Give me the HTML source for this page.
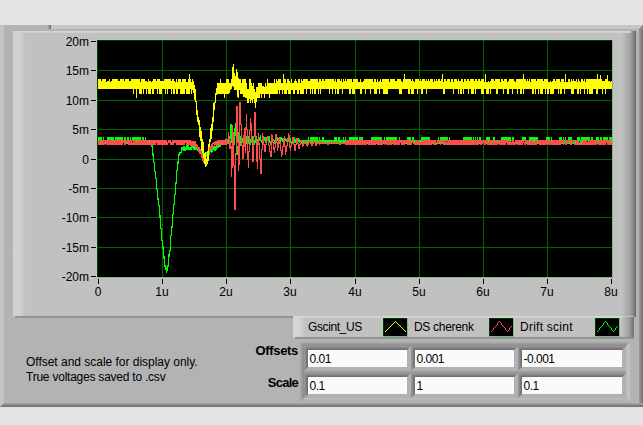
<!DOCTYPE html>
<html><head><meta charset="utf-8"><title>Waveform display</title>
<style>
html,body{margin:0;padding:0}
body{width:643px;height:425px;overflow:hidden;background:#e4e4e4;position:relative;font-family:"Liberation Sans",sans-serif;font-size:12px;color:#000}
div,span{position:absolute;box-sizing:border-box}
.t{white-space:nowrap;line-height:14px;height:14px}
.yl{right:554px;text-align:right}
.xl{text-align:center;width:40px}
.b{font-weight:bold;font-size:13px;text-align:right;right:345px}
</style></head><body>

<div id="panel" style="left:0;top:25px;width:643px;height:382px;background:#b3b3b3"></div>
<div style="left:0;top:25px;width:4px;height:382px;background:#c5c5c5"></div>
<div style="left:51px;top:25px;width:592px;height:4px;background:#c6c6c6"></div>
<div style="left:47px;top:25px;width:4px;height:4px;background:linear-gradient(90deg,#b0b0b0,#999 50%,#5e5e5e)"></div>
<div style="left:639px;top:29px;width:4px;height:378px;background:linear-gradient(90deg,#9a9a9a,#747474)"></div>
<div style="left:0;top:403px;width:643px;height:4px;background:linear-gradient(180deg,#a8a8a8,#6c6c6c)"></div>
<svg style="position:absolute;left:0;top:0" width="643" height="425" shape-rendering="auto"><polygon points="639,29 643,25 643,29" fill="#8a8a8a"/><polygon points="0,403 4,403 0,407" fill="#c5c5c5"/></svg>
<div id="graph" style="left:13px;top:31px;width:623px;height:286px;background:#c1c1c1"></div>
<div style="left:13px;top:31px;width:12px;height:285px;background:linear-gradient(90deg,#d3d3d3,#d0d0d0 62%,#c1c1c1)"></div>
<div style="left:622px;top:31px;width:14px;height:286px;background:linear-gradient(90deg,#c1c1c1,#a0a0a0 60%,#7a7a7a 90%,#5c5c5c)"></div>
<div style="left:13px;top:31px;width:618px;height:2px;background:linear-gradient(180deg,#d6d6d6,#cecece)"></div>
<div style="left:15px;top:316px;width:278px;height:2px;background:linear-gradient(180deg,#8c8c8c,#9c9c9c)"></div>
<div id="legend" style="left:293px;top:316px;width:341px;height:22px;background:#c1c1c1"></div>
<div style="left:293px;top:316px;width:12px;height:22px;background:linear-gradient(90deg,#d6d6d6,#d2d2d2 62%,#c1c1c1)"></div>
<div style="left:621px;top:317px;width:13px;height:21px;background:linear-gradient(90deg,#c4c4c4,#a0a0a0 60%,#707070)"></div>
<div style="left:293px;top:316px;width:330px;height:2px;background:linear-gradient(180deg,#d8d8d8,#cecece)"></div>
<div style="left:295px;top:337px;width:339px;height:2px;background:linear-gradient(180deg,#8a8a8a,#999)"></div>
<svg style="position:absolute;left:0;top:0" width="643" height="425" shape-rendering="crispEdges">
<rect x="97" y="40" width="516" height="238" fill="#7fb97f"/><rect x="97" y="40" width="515" height="237" fill="#003c00"/><rect x="98" y="41" width="514" height="236" fill="#000"/>
<g fill="#006400"><rect x="162" y="40" width="1" height="237"/><rect x="226" y="40" width="1" height="237"/><rect x="290" y="40" width="1" height="237"/><rect x="355" y="40" width="1" height="237"/><rect x="419" y="40" width="1" height="237"/><rect x="483" y="40" width="1" height="237"/><rect x="547" y="40" width="1" height="237"/><rect x="97" y="70" width="515" height="1"/><rect x="97" y="100" width="515" height="1"/><rect x="97" y="129" width="515" height="1"/><rect x="97" y="159" width="515" height="1"/><rect x="97" y="188" width="515" height="1"/><rect x="97" y="217" width="515" height="1"/><rect x="97" y="247" width="515" height="1"/></g>
<path d="M98 137h1v7h-1zM99 137h1v4h-1zM100 137h1v7h-1zM101 137h1v7h-1zM102 140h1v4h-1zM103 137h1v7h-1zM104 140h1v1h-1zM105 140h1v4h-1zM106 140h1v4h-1zM107 137h1v7h-1zM108 137h1v7h-1zM109 137h1v7h-1zM110 137h1v7h-1zM111 137h1v4h-1zM112 137h1v7h-1zM113 137h1v7h-1zM114 140h1v4h-1zM115 137h1v7h-1zM116 137h1v4h-1zM117 137h1v7h-1zM118 137h1v7h-1zM119 137h1v7h-1zM120 137h1v7h-1zM121 137h1v7h-1zM122 137h1v7h-1zM123 140h1v1h-1zM124 137h1v7h-1zM125 137h1v7h-1zM126 140h1v4h-1zM127 137h1v7h-1zM128 137h1v7h-1zM129 143h1v1h-1zM130 137h1v7h-1zM131 140h1v4h-1zM132 137h1v4h-1zM133 137h1v4h-1zM134 137h1v7h-1zM135 137h1v7h-1zM136 137h1v7h-1zM137 137h1v4h-1zM138 137h1v7h-1zM139 137h1v7h-1zM140 137h1v7h-1zM141 140h1v4h-1zM142 137h1v7h-1zM143 137h1v7h-1zM144 140h1v4h-1zM145 137h1v7h-1zM146 140h1v4h-1zM147 140h1v4h-1zM148 140h1v4h-1zM149 140h1v4h-1zM150 140h1v3h-1zM151 140h1v7h-1zM152 143h1v13h-1zM153 153h1v10h-1zM154 162h1v10h-1zM155 171h1v8h-1zM156 178h1v12h-1zM157 189h1v11h-1zM158 198h1v8h-1zM159 205h1v13h-1zM160 215h1v14h-1zM161 228h1v13h-1zM162 240h1v9h-1zM163 246h1v13h-1zM164 256h1v11h-1zM165 265h1v5h-1zM166 267h1v6h-1zM167 265h1v6h-1zM168 254h1v13h-1zM169 250h1v7h-1zM170 235h1v16h-1zM171 226h1v10h-1zM172 214h1v14h-1zM173 204h1v11h-1zM174 194h1v11h-1zM175 182h1v13h-1zM176 170h1v14h-1zM177 161h1v10h-1zM178 154h1v10h-1zM179 152h1v4h-1zM180 152h1v2h-1zM181 147h1v6h-1zM182 147h1v3h-1zM183 146h1v5h-1zM184 146h1v5h-1zM185 147h1v4h-1zM186 145h1v5h-1zM187 145h1v5h-1zM188 145h1v5h-1zM189 147h1v3h-1zM190 147h1v3h-1zM191 145h1v5h-1zM192 145h1v3h-1zM193 145h1v5h-1zM194 145h1v5h-1zM195 145h1v5h-1zM196 145h1v5h-1zM197 146h1v5h-1zM198 147h1v5h-1zM199 150h1v3h-1zM200 149h1v5h-1zM201 150h1v6h-1zM202 151h1v6h-1zM203 152h1v7h-1zM204 154h1v5h-1zM205 153h1v5h-1zM206 152h1v5h-1zM207 151h1v5h-1zM208 150h1v4h-1zM209 149h1v6h-1zM210 148h1v4h-1zM211 147h1v6h-1zM212 147h1v5h-1zM213 146h1v4h-1zM214 146h1v5h-1zM215 146h1v5h-1zM216 146h1v4h-1zM217 144h1v4h-1zM218 143h1v5h-1zM219 142h1v5h-1zM220 143h1v4h-1zM221 141h1v3h-1zM222 140h1v4h-1zM223 140h1v5h-1zM224 140h1v3h-1zM225 139h1v5h-1zM226 139h1v5h-1zM227 139h1v5h-1zM228 139h1v5h-1zM229 138h1v9h-1zM230 124h1v15h-1zM231 124h1v19h-1zM232 142h1v17h-1zM233 144h1v13h-1zM234 128h1v17h-1zM235 123h1v13h-1zM236 135h1v20h-1zM237 146h1v9h-1zM238 132h1v15h-1zM239 127h1v10h-1zM240 136h1v10h-1zM241 140h1v6h-1zM242 138h1v5h-1zM243 135h1v4h-1zM244 136h1v8h-1zM245 142h1v4h-1zM246 136h1v8h-1zM247 136h1v4h-1zM248 136h1v8h-1zM249 141h1v4h-1zM250 139h1v6h-1zM251 135h1v6h-1zM252 136h1v6h-1zM253 140h1v5h-1zM254 140h1v5h-1zM255 136h1v7h-1zM256 136h1v4h-1zM257 139h1v6h-1zM258 139h1v6h-1zM259 137h1v4h-1zM260 135h1v6h-1zM261 140h1v3h-1zM262 140h1v5h-1zM263 139h1v5h-1zM264 137h1v4h-1zM265 137h1v6h-1zM266 139h1v5h-1zM267 138h1v3h-1zM268 136h1v4h-1zM269 136h1v7h-1zM270 141h1v4h-1zM271 140h1v4h-1zM272 138h1v4h-1zM273 139h1v2h-1zM274 140h1v4h-1zM275 140h1v4h-1zM276 137h1v5h-1zM277 137h1v4h-1zM278 138h1v6h-1zM279 141h1v3h-1zM280 137h1v6h-1zM281 137h1v4h-1zM282 138h1v4h-1zM283 140h1v3h-1zM284 138h1v4h-1zM285 138h1v3h-1zM286 139h1v3h-1zM287 139h1v4h-1zM288 139h1v3h-1zM289 138h1v4h-1zM290 138h1v5h-1zM291 142h1v2h-1zM292 139h1v5h-1zM293 137h1v5h-1zM294 137h1v6h-1zM295 139h1v4h-1zM296 139h1v5h-1zM297 139h1v3h-1zM298 138h1v4h-1zM299 139h1v4h-1zM300 140h1v4h-1zM301 140h1v4h-1zM302 140h1v4h-1zM303 140h1v4h-1zM304 140h1v4h-1zM305 140h1v4h-1zM306 140h1v4h-1zM307 140h1v4h-1zM308 137h1v7h-1zM309 140h1v1h-1zM310 137h1v4h-1zM311 137h1v7h-1zM312 137h1v7h-1zM313 137h1v7h-1zM314 137h1v4h-1zM315 137h1v7h-1zM316 137h1v7h-1zM317 137h1v7h-1zM318 140h1v4h-1zM319 137h1v7h-1zM320 140h1v4h-1zM321 140h1v4h-1zM322 137h1v7h-1zM323 137h1v7h-1zM324 140h1v4h-1zM325 140h1v4h-1zM326 140h1v4h-1zM327 140h1v4h-1zM328 140h1v4h-1zM329 140h1v4h-1zM330 140h1v4h-1zM331 140h1v4h-1zM332 140h1v4h-1zM333 140h1v4h-1zM334 137h1v7h-1zM335 137h1v7h-1zM336 137h1v7h-1zM337 140h1v4h-1zM338 137h1v7h-1zM339 137h1v7h-1zM340 140h1v4h-1zM341 140h1v4h-1zM342 140h1v4h-1zM343 137h1v7h-1zM344 140h1v4h-1zM345 137h1v7h-1zM346 140h1v4h-1zM347 140h1v4h-1zM348 140h1v4h-1zM349 137h1v7h-1zM350 137h1v7h-1zM351 137h1v7h-1zM352 137h1v7h-1zM353 137h1v7h-1zM354 137h1v7h-1zM355 137h1v7h-1zM356 137h1v7h-1zM357 137h1v7h-1zM358 140h1v4h-1zM359 137h1v7h-1zM360 137h1v7h-1zM361 137h1v7h-1zM362 137h1v7h-1zM363 140h1v4h-1zM364 140h1v4h-1zM365 140h1v4h-1zM366 140h1v4h-1zM367 140h1v4h-1zM368 140h1v4h-1zM369 140h1v4h-1zM370 140h1v4h-1zM371 137h1v7h-1zM372 137h1v4h-1zM373 137h1v7h-1zM374 137h1v7h-1zM375 137h1v7h-1zM376 137h1v7h-1zM377 137h1v7h-1zM378 137h1v7h-1zM379 137h1v4h-1zM380 137h1v7h-1zM381 137h1v7h-1zM382 140h1v1h-1zM383 140h1v4h-1zM384 137h1v7h-1zM385 140h1v4h-1zM386 137h1v7h-1zM387 137h1v7h-1zM388 137h1v7h-1zM389 137h1v7h-1zM390 137h1v7h-1zM391 137h1v7h-1zM392 137h1v7h-1zM393 137h1v4h-1zM394 137h1v7h-1zM395 137h1v4h-1zM396 137h1v7h-1zM397 140h1v4h-1zM398 140h1v4h-1zM399 137h1v4h-1zM400 140h1v1h-1zM401 140h1v4h-1zM402 140h1v4h-1zM403 140h1v4h-1zM404 140h1v4h-1zM405 140h1v4h-1zM406 140h1v4h-1zM407 137h1v7h-1zM408 137h1v7h-1zM409 137h1v7h-1zM410 137h1v7h-1zM411 140h1v4h-1zM412 137h1v4h-1zM413 137h1v7h-1zM414 140h1v4h-1zM415 140h1v4h-1zM416 140h1v1h-1zM417 140h1v4h-1zM418 140h1v4h-1zM419 140h1v4h-1zM420 140h1v4h-1zM421 137h1v7h-1zM422 137h1v7h-1zM423 137h1v7h-1zM424 137h1v7h-1zM425 137h1v7h-1zM426 137h1v7h-1zM427 137h1v7h-1zM428 137h1v7h-1zM429 137h1v7h-1zM430 143h1v1h-1zM431 143h1v1h-1zM432 140h1v4h-1zM433 140h1v4h-1zM434 140h1v4h-1zM435 140h1v4h-1zM436 140h1v1h-1zM437 140h1v4h-1zM438 137h1v7h-1zM439 140h1v4h-1zM440 137h1v7h-1zM441 137h1v7h-1zM442 137h1v7h-1zM443 137h1v7h-1zM444 137h1v7h-1zM445 137h1v7h-1zM446 137h1v4h-1zM447 137h1v4h-1zM448 140h1v4h-1zM449 137h1v7h-1zM450 140h1v4h-1zM451 140h1v4h-1zM452 140h1v4h-1zM453 140h1v4h-1zM454 140h1v4h-1zM455 140h1v4h-1zM456 140h1v4h-1zM457 140h1v4h-1zM458 140h1v4h-1zM459 140h1v4h-1zM460 140h1v4h-1zM461 140h1v4h-1zM462 140h1v4h-1zM463 137h1v7h-1zM464 137h1v7h-1zM465 137h1v7h-1zM466 137h1v7h-1zM467 137h1v4h-1zM468 137h1v4h-1zM469 137h1v7h-1zM470 137h1v4h-1zM471 137h1v7h-1zM472 140h1v4h-1zM473 137h1v7h-1zM474 140h1v4h-1zM475 137h1v7h-1zM476 140h1v4h-1zM477 137h1v7h-1zM478 140h1v4h-1zM479 137h1v7h-1zM480 137h1v7h-1zM481 140h1v4h-1zM482 140h1v4h-1zM483 140h1v1h-1zM484 140h1v4h-1zM485 140h1v4h-1zM486 137h1v7h-1zM487 137h1v7h-1zM488 137h1v7h-1zM489 137h1v7h-1zM490 140h1v4h-1zM491 140h1v4h-1zM492 140h1v4h-1zM493 137h1v7h-1zM494 137h1v7h-1zM495 140h1v4h-1zM496 140h1v4h-1zM497 140h1v4h-1zM498 140h1v4h-1zM499 140h1v4h-1zM500 140h1v4h-1zM501 137h1v7h-1zM502 137h1v7h-1zM503 137h1v7h-1zM504 137h1v7h-1zM505 137h1v7h-1zM506 137h1v4h-1zM507 137h1v7h-1zM508 137h1v7h-1zM509 137h1v7h-1zM510 137h1v7h-1zM511 140h1v1h-1zM512 137h1v7h-1zM513 137h1v7h-1zM514 143h1v1h-1zM515 140h1v4h-1zM516 140h1v4h-1zM517 140h1v4h-1zM518 140h1v4h-1zM519 140h1v4h-1zM520 140h1v4h-1zM521 140h1v4h-1zM522 137h1v7h-1zM523 137h1v4h-1zM524 137h1v4h-1zM525 137h1v7h-1zM526 140h1v4h-1zM527 140h1v4h-1zM528 140h1v4h-1zM529 137h1v7h-1zM530 137h1v7h-1zM531 137h1v7h-1zM532 137h1v7h-1zM533 137h1v7h-1zM534 137h1v7h-1zM535 137h1v4h-1zM536 137h1v7h-1zM537 137h1v7h-1zM538 140h1v4h-1zM539 140h1v1h-1zM540 140h1v4h-1zM541 140h1v4h-1zM542 140h1v4h-1zM543 140h1v4h-1zM544 140h1v1h-1zM545 140h1v4h-1zM546 137h1v7h-1zM547 137h1v7h-1zM548 137h1v7h-1zM549 137h1v7h-1zM550 140h1v4h-1zM551 137h1v7h-1zM552 140h1v4h-1zM553 140h1v4h-1zM554 140h1v4h-1zM555 140h1v4h-1zM556 140h1v1h-1zM557 140h1v4h-1zM558 140h1v4h-1zM559 137h1v7h-1zM560 137h1v7h-1zM561 137h1v7h-1zM562 140h1v4h-1zM563 137h1v7h-1zM564 140h1v4h-1zM565 137h1v4h-1zM566 140h1v4h-1zM567 140h1v4h-1zM568 137h1v7h-1zM569 137h1v7h-1zM570 137h1v7h-1zM571 137h1v7h-1zM572 140h1v4h-1zM573 140h1v4h-1zM574 140h1v4h-1zM575 140h1v4h-1zM576 140h1v4h-1zM577 137h1v7h-1zM578 137h1v7h-1zM579 137h1v4h-1zM580 140h1v4h-1zM581 137h1v7h-1zM582 137h1v7h-1zM583 137h1v7h-1zM584 137h1v4h-1zM585 137h1v7h-1zM586 137h1v7h-1zM587 137h1v4h-1zM588 137h1v7h-1zM589 137h1v7h-1zM590 140h1v4h-1zM591 137h1v7h-1zM592 137h1v7h-1zM593 140h1v4h-1zM594 140h1v4h-1zM595 140h1v4h-1zM596 137h1v7h-1zM597 137h1v7h-1zM598 137h1v7h-1zM599 140h1v4h-1zM600 137h1v7h-1zM601 137h1v7h-1zM602 140h1v4h-1zM603 137h1v7h-1zM604 137h1v7h-1zM605 137h1v7h-1zM606 137h1v4h-1zM607 137h1v7h-1zM608 140h1v4h-1zM609 137h1v7h-1zM610 137h1v7h-1zM611 137h1v7h-1z" fill="#00ff00"/>
<path d="M98 142h1v3h-1zM99 140h1v5h-1zM100 140h1v5h-1zM101 142h1v3h-1zM102 140h1v5h-1zM103 140h1v5h-1zM104 140h1v5h-1zM105 140h1v3h-1zM106 140h1v5h-1zM107 140h1v5h-1zM108 140h1v5h-1zM109 140h1v5h-1zM110 140h1v5h-1zM111 140h1v5h-1zM112 140h1v5h-1zM113 142h1v3h-1zM114 140h1v5h-1zM115 140h1v5h-1zM116 140h1v5h-1zM117 140h1v5h-1zM118 140h1v5h-1zM119 140h1v5h-1zM120 140h1v5h-1zM121 140h1v5h-1zM122 140h1v5h-1zM123 140h1v3h-1zM124 140h1v5h-1zM125 140h1v5h-1zM126 140h1v3h-1zM127 140h1v3h-1zM128 140h1v5h-1zM129 140h1v5h-1zM130 140h1v5h-1zM131 140h1v5h-1zM132 142h1v3h-1zM133 140h1v5h-1zM134 140h1v5h-1zM135 140h1v5h-1zM136 142h1v3h-1zM137 140h1v5h-1zM138 140h1v5h-1zM139 140h1v5h-1zM140 140h1v5h-1zM141 140h1v5h-1zM142 140h1v5h-1zM143 140h1v5h-1zM144 140h1v5h-1zM145 140h1v5h-1zM146 140h1v5h-1zM147 140h1v5h-1zM148 140h1v5h-1zM149 142h1v3h-1zM150 140h1v5h-1zM151 140h1v5h-1zM152 140h1v5h-1zM153 140h1v5h-1zM154 140h1v5h-1zM155 140h1v5h-1zM156 140h1v3h-1zM157 140h1v5h-1zM158 140h1v5h-1zM159 140h1v5h-1zM160 140h1v5h-1zM161 140h1v5h-1zM162 140h1v5h-1zM163 140h1v5h-1zM164 140h1v5h-1zM165 140h1v5h-1zM166 140h1v5h-1zM167 142h1v3h-1zM168 140h1v3h-1zM169 140h1v3h-1zM170 140h1v5h-1zM171 142h1v3h-1zM172 140h1v5h-1zM173 140h1v5h-1zM174 140h1v3h-1zM175 140h1v3h-1zM176 140h1v5h-1zM177 140h1v5h-1zM178 140h1v5h-1zM179 140h1v5h-1zM180 140h1v5h-1zM181 140h1v5h-1zM182 140h1v5h-1zM183 140h1v5h-1zM184 140h1v5h-1zM185 140h1v3h-1zM186 140h1v5h-1zM187 140h1v5h-1zM188 140h1v5h-1zM189 140h1v5h-1zM190 140h1v6h-1zM191 141h1v5h-1zM192 141h1v5h-1zM193 141h1v5h-1zM194 141h1v5h-1zM195 141h1v6h-1zM196 144h1v5h-1zM197 145h1v4h-1zM198 147h1v5h-1zM199 147h1v7h-1zM200 150h1v3h-1zM201 152h1v6h-1zM202 155h1v6h-1zM203 156h1v7h-1zM204 159h1v5h-1zM205 158h1v4h-1zM206 158h1v4h-1zM207 152h1v8h-1zM208 150h1v5h-1zM209 147h1v4h-1zM210 146h1v4h-1zM211 144h1v6h-1zM212 143h1v6h-1zM213 142h1v2h-1zM214 142h1v5h-1zM215 141h1v4h-1zM216 141h1v5h-1zM217 140h1v6h-1zM218 140h1v3h-1zM219 140h1v5h-1zM220 140h1v5h-1zM221 140h1v5h-1zM222 140h1v5h-1zM223 140h1v5h-1zM224 140h1v5h-1zM225 140h1v5h-1zM226 140h1v5h-1zM227 140h1v4h-1zM228 132h1v9h-1zM229 136h1v13h-1zM230 140h1v9h-1zM231 146h1v31h-1zM232 125h1v43h-1zM233 132h1v34h-1zM234 165h1v45h-1zM235 153h1v57h-1zM236 106h1v48h-1zM237 106h1v37h-1zM238 142h1v29h-1zM239 102h1v63h-1zM240 102h1v23h-1zM241 124h1v22h-1zM242 145h1v14h-1zM243 135h1v24h-1zM244 128h1v19h-1zM245 127h1v26h-1zM246 114h1v16h-1zM247 129h1v31h-1zM248 151h1v17h-1zM249 130h1v22h-1zM250 118h1v13h-1zM251 123h1v20h-1zM252 142h1v20h-1zM253 136h1v26h-1zM254 112h1v25h-1zM255 112h1v26h-1zM256 137h1v25h-1zM257 141h1v28h-1zM258 133h1v11h-1zM259 143h1v16h-1zM260 158h1v16h-1zM261 149h1v25h-1zM262 133h1v17h-1zM263 136h1v9h-1zM264 144h1v8h-1zM265 144h1v8h-1zM266 137h1v8h-1zM267 136h1v5h-1zM268 140h1v6h-1zM269 145h1v7h-1zM270 151h1v6h-1zM271 134h1v23h-1zM272 135h1v8h-1zM273 142h1v8h-1zM274 147h1v6h-1zM275 134h1v14h-1zM276 134h1v9h-1zM277 142h1v9h-1zM278 139h1v9h-1zM279 137h1v6h-1zM280 142h1v9h-1zM281 150h1v7h-1zM282 146h1v9h-1zM283 138h1v9h-1zM284 136h1v11h-1zM285 146h1v9h-1zM286 145h1v7h-1zM287 138h1v8h-1zM288 133h1v6h-1zM289 135h1v13h-1zM290 146h1v5h-1zM291 141h1v6h-1zM292 137h1v5h-1zM293 137h1v8h-1zM294 144h1v7h-1zM295 144h1v7h-1zM296 138h1v7h-1zM297 138h1v6h-1zM298 143h1v6h-1zM299 144h1v5h-1zM300 140h1v5h-1zM301 140h1v4h-1zM302 143h1v4h-1zM303 143h1v3h-1zM304 141h1v3h-1zM305 141h1v3h-1zM306 143h1v3h-1zM307 144h1v3h-1zM308 142h1v3h-1zM309 140h1v3h-1zM310 141h1v3h-1zM311 143h1v3h-1zM312 142h1v4h-1zM313 140h1v3h-1zM314 140h1v3h-1zM315 142h1v4h-1zM316 143h1v3h-1zM317 141h1v3h-1zM318 141h1v3h-1zM319 143h1v2h-1zM320 142h1v2h-1zM321 141h1v2h-1zM322 141h1v3h-1zM323 143h1v1h-1zM324 142h1v2h-1zM325 142h1v1h-1zM326 142h1v2h-1zM327 143h1v2h-1zM328 142h1v3h-1zM329 142h1v1h-1zM330 142h1v2h-1zM331 143h1v1h-1zM332 141h1v3h-1zM333 141h1v2h-1zM334 142h1v2h-1zM335 142h1v2h-1zM336 142h1v1h-1zM337 141h1v2h-1zM338 142h1v2h-1zM339 143h1v2h-1zM340 143h1v2h-1zM341 142h1v2h-1zM342 142h1v2h-1zM343 143h1v1h-1zM344 142h1v2h-1zM345 142h1v3h-1zM346 140h1v5h-1zM347 140h1v5h-1zM348 140h1v5h-1zM349 140h1v5h-1zM350 140h1v5h-1zM351 140h1v5h-1zM352 140h1v5h-1zM353 140h1v5h-1zM354 140h1v5h-1zM355 140h1v5h-1zM356 140h1v5h-1zM357 140h1v5h-1zM358 140h1v5h-1zM359 140h1v5h-1zM360 140h1v5h-1zM361 140h1v5h-1zM362 140h1v5h-1zM363 140h1v5h-1zM364 140h1v5h-1zM365 140h1v5h-1zM366 140h1v5h-1zM367 140h1v3h-1zM368 140h1v5h-1zM369 140h1v5h-1zM370 140h1v5h-1zM371 140h1v5h-1zM372 140h1v5h-1zM373 140h1v5h-1zM374 140h1v5h-1zM375 140h1v5h-1zM376 140h1v3h-1zM377 140h1v5h-1zM378 140h1v5h-1zM379 140h1v5h-1zM380 140h1v5h-1zM381 140h1v5h-1zM382 140h1v5h-1zM383 140h1v3h-1zM384 140h1v5h-1zM385 140h1v3h-1zM386 140h1v5h-1zM387 140h1v5h-1zM388 140h1v5h-1zM389 140h1v5h-1zM390 140h1v5h-1zM391 140h1v5h-1zM392 140h1v3h-1zM393 140h1v5h-1zM394 140h1v5h-1zM395 140h1v5h-1zM396 140h1v5h-1zM397 140h1v5h-1zM398 140h1v5h-1zM399 140h1v5h-1zM400 140h1v3h-1zM401 140h1v5h-1zM402 140h1v5h-1zM403 140h1v5h-1zM404 140h1v5h-1zM405 140h1v3h-1zM406 140h1v3h-1zM407 140h1v5h-1zM408 140h1v5h-1zM409 140h1v5h-1zM410 142h1v3h-1zM411 140h1v5h-1zM412 140h1v3h-1zM413 140h1v3h-1zM414 142h1v3h-1zM415 142h1v3h-1zM416 140h1v5h-1zM417 140h1v5h-1zM418 140h1v5h-1zM419 142h1v3h-1zM420 142h1v3h-1zM421 142h1v3h-1zM422 140h1v5h-1zM423 140h1v5h-1zM424 140h1v5h-1zM425 140h1v5h-1zM426 140h1v5h-1zM427 140h1v5h-1zM428 140h1v5h-1zM429 140h1v5h-1zM430 140h1v5h-1zM431 140h1v5h-1zM432 140h1v3h-1zM433 140h1v5h-1zM434 140h1v5h-1zM435 140h1v5h-1zM436 142h1v3h-1zM437 140h1v3h-1zM438 140h1v3h-1zM439 140h1v3h-1zM440 140h1v5h-1zM441 140h1v3h-1zM442 140h1v3h-1zM443 140h1v5h-1zM444 140h1v5h-1zM445 140h1v5h-1zM446 142h1v3h-1zM447 140h1v5h-1zM448 140h1v5h-1zM449 140h1v5h-1zM450 140h1v5h-1zM451 140h1v5h-1zM452 140h1v5h-1zM453 140h1v5h-1zM454 140h1v5h-1zM455 140h1v5h-1zM456 140h1v5h-1zM457 140h1v5h-1zM458 140h1v5h-1zM459 140h1v5h-1zM460 140h1v5h-1zM461 140h1v5h-1zM462 140h1v5h-1zM463 140h1v5h-1zM464 140h1v5h-1zM465 140h1v5h-1zM466 140h1v5h-1zM467 140h1v5h-1zM468 140h1v5h-1zM469 140h1v5h-1zM470 140h1v5h-1zM471 140h1v5h-1zM472 142h1v3h-1zM473 140h1v5h-1zM474 140h1v5h-1zM475 140h1v5h-1zM476 140h1v5h-1zM477 140h1v5h-1zM478 140h1v5h-1zM479 140h1v3h-1zM480 140h1v5h-1zM481 140h1v5h-1zM482 140h1v3h-1zM483 140h1v3h-1zM484 140h1v5h-1zM485 140h1v5h-1zM486 140h1v3h-1zM487 140h1v5h-1zM488 142h1v3h-1zM489 140h1v5h-1zM490 140h1v5h-1zM491 140h1v5h-1zM492 140h1v5h-1zM493 142h1v3h-1zM494 140h1v5h-1zM495 140h1v5h-1zM496 140h1v5h-1zM497 142h1v3h-1zM498 140h1v3h-1zM499 140h1v5h-1zM500 140h1v5h-1zM501 140h1v5h-1zM502 140h1v5h-1zM503 140h1v5h-1zM504 140h1v5h-1zM505 140h1v5h-1zM506 140h1v3h-1zM507 140h1v5h-1zM508 140h1v5h-1zM509 140h1v5h-1zM510 142h1v3h-1zM511 142h1v3h-1zM512 140h1v5h-1zM513 140h1v5h-1zM514 142h1v3h-1zM515 140h1v5h-1zM516 140h1v3h-1zM517 140h1v5h-1zM518 140h1v5h-1zM519 140h1v5h-1zM520 140h1v5h-1zM521 140h1v5h-1zM522 140h1v5h-1zM523 140h1v3h-1zM524 142h1v3h-1zM525 140h1v5h-1zM526 140h1v3h-1zM527 140h1v5h-1zM528 140h1v5h-1zM529 142h1v3h-1zM530 140h1v5h-1zM531 140h1v5h-1zM532 140h1v5h-1zM533 142h1v3h-1zM534 142h1v3h-1zM535 140h1v5h-1zM536 140h1v5h-1zM537 140h1v3h-1zM538 140h1v3h-1zM539 140h1v5h-1zM540 140h1v5h-1zM541 140h1v5h-1zM542 140h1v5h-1zM543 140h1v5h-1zM544 140h1v5h-1zM545 140h1v5h-1zM546 140h1v5h-1zM547 140h1v3h-1zM548 140h1v5h-1zM549 140h1v5h-1zM550 140h1v5h-1zM551 142h1v3h-1zM552 140h1v5h-1zM553 140h1v5h-1zM554 140h1v5h-1zM555 140h1v5h-1zM556 140h1v5h-1zM557 140h1v5h-1zM558 140h1v5h-1zM559 140h1v5h-1zM560 140h1v5h-1zM561 140h1v3h-1zM562 140h1v3h-1zM563 140h1v5h-1zM564 142h1v1h-1zM565 140h1v5h-1zM566 140h1v5h-1zM567 140h1v3h-1zM568 140h1v3h-1zM569 140h1v1h-1zM570 140h1v5h-1zM571 140h1v5h-1zM572 140h1v3h-1zM573 140h1v3h-1zM574 140h1v5h-1zM575 144h1v1h-1zM576 140h1v5h-1zM577 140h1v5h-1zM578 142h1v3h-1zM579 142h1v3h-1zM580 142h1v3h-1zM581 144h1v1h-1zM582 140h1v5h-1zM583 140h1v5h-1zM584 140h1v5h-1zM585 140h1v5h-1zM586 140h1v5h-1zM587 142h1v3h-1zM588 140h1v5h-1zM589 140h1v5h-1zM590 140h1v5h-1zM591 140h1v5h-1zM592 140h1v5h-1zM593 140h1v5h-1zM594 140h1v5h-1zM595 140h1v5h-1zM596 142h1v3h-1zM597 140h1v3h-1zM598 142h1v3h-1zM599 140h1v5h-1zM600 140h1v5h-1zM601 140h1v5h-1zM602 140h1v5h-1zM603 140h1v5h-1zM604 140h1v5h-1zM605 140h1v5h-1zM606 140h1v3h-1zM607 140h1v5h-1zM608 140h1v5h-1zM609 140h1v5h-1zM610 140h1v5h-1zM611 142h1v3h-1z" fill="#ff4d4d"/>
<path d="M98 79h1v10h-1zM99 79h1v10h-1zM100 79h1v10h-1zM101 81h1v8h-1zM102 79h1v10h-1zM103 79h1v10h-1zM104 79h1v10h-1zM105 79h1v10h-1zM106 82h1v7h-1zM107 81h1v8h-1zM108 81h1v8h-1zM109 79h1v10h-1zM110 82h1v7h-1zM111 81h1v8h-1zM112 79h1v10h-1zM113 79h1v10h-1zM114 79h1v10h-1zM115 79h1v10h-1zM116 79h1v10h-1zM117 79h1v10h-1zM118 81h1v8h-1zM119 81h1v8h-1zM120 79h1v10h-1zM121 79h1v10h-1zM122 79h1v10h-1zM123 79h1v10h-1zM124 81h1v8h-1zM125 79h1v10h-1zM126 79h1v10h-1zM127 79h1v10h-1zM128 79h1v10h-1zM129 81h1v8h-1zM130 81h1v8h-1zM131 79h1v10h-1zM132 79h1v10h-1zM133 79h1v15h-1zM134 79h1v10h-1zM135 79h1v10h-1zM136 79h1v19h-1zM137 79h1v10h-1zM138 79h1v10h-1zM139 79h1v15h-1zM140 82h1v12h-1zM141 79h1v15h-1zM142 79h1v10h-1zM143 79h1v15h-1zM144 79h1v10h-1zM145 81h1v8h-1zM146 81h1v13h-1zM147 82h1v7h-1zM148 79h1v15h-1zM149 81h1v13h-1zM150 81h1v13h-1zM151 82h1v7h-1zM152 81h1v13h-1zM153 79h1v15h-1zM154 79h1v10h-1zM155 79h1v10h-1zM156 81h1v8h-1zM157 79h1v15h-1zM158 79h1v10h-1zM159 79h1v15h-1zM160 81h1v13h-1zM161 81h1v13h-1zM162 81h1v8h-1zM163 81h1v8h-1zM164 79h1v10h-1zM165 79h1v15h-1zM166 79h1v10h-1zM167 79h1v15h-1zM168 79h1v10h-1zM169 79h1v10h-1zM170 79h1v10h-1zM171 81h1v13h-1zM172 79h1v10h-1zM173 79h1v15h-1zM174 81h1v13h-1zM175 82h1v7h-1zM176 79h1v15h-1zM177 82h1v12h-1zM178 79h1v10h-1zM179 79h1v10h-1zM180 79h1v15h-1zM181 82h1v12h-1zM182 79h1v15h-1zM183 79h1v15h-1zM184 79h1v15h-1zM185 79h1v10h-1zM186 82h1v12h-1zM187 82h1v12h-1zM188 79h1v15h-1zM189 74h1v20h-1zM190 79h1v10h-1zM191 82h1v12h-1zM192 79h1v11h-1zM193 81h1v12h-1zM194 85h1v15h-1zM195 89h1v13h-1zM196 101h1v14h-1zM197 110h1v12h-1zM198 117h1v8h-1zM199 120h1v17h-1zM200 127h1v14h-1zM201 131h1v19h-1zM202 139h1v14h-1zM203 142h1v16h-1zM204 153h1v11h-1zM205 152h1v15h-1zM206 159h1v7h-1zM207 151h1v13h-1zM208 144h1v17h-1zM209 139h1v8h-1zM210 128h1v14h-1zM211 124h1v15h-1zM212 117h1v14h-1zM213 103h1v19h-1zM214 102h1v8h-1zM215 93h1v10h-1zM216 88h1v7h-1zM217 83h1v11h-1zM218 83h1v11h-1zM219 83h1v11h-1zM220 79h1v15h-1zM221 83h1v11h-1zM222 83h1v11h-1zM223 83h1v11h-1zM224 83h1v15h-1zM225 83h1v11h-1zM226 79h1v15h-1zM227 79h1v15h-1zM228 79h1v15h-1zM229 83h1v10h-1zM230 83h1v7h-1zM231 79h1v10h-1zM232 67h1v19h-1zM233 64h1v23h-1zM234 73h1v17h-1zM235 76h1v14h-1zM236 69h1v21h-1zM237 72h1v25h-1zM238 78h1v20h-1zM239 79h1v11h-1zM240 79h1v15h-1zM241 83h1v11h-1zM242 79h1v15h-1zM243 79h1v18h-1zM244 79h1v18h-1zM245 79h1v19h-1zM246 83h1v15h-1zM247 89h1v14h-1zM248 89h1v14h-1zM249 79h1v20h-1zM250 79h1v24h-1zM251 83h1v17h-1zM252 86h1v17h-1zM253 83h1v16h-1zM254 89h1v14h-1zM255 92h1v16h-1zM256 87h1v15h-1zM257 87h1v11h-1zM258 83h1v15h-1zM259 83h1v15h-1zM260 83h1v11h-1zM261 83h1v15h-1zM262 86h1v8h-1zM263 86h1v8h-1zM264 87h1v11h-1zM265 83h1v11h-1zM266 86h1v8h-1zM267 79h1v15h-1zM268 83h1v11h-1zM269 83h1v15h-1zM270 83h1v11h-1zM271 83h1v11h-1zM272 83h1v11h-1zM273 83h1v11h-1zM274 79h1v15h-1zM275 83h1v11h-1zM276 79h1v15h-1zM277 81h1v13h-1zM278 79h1v11h-1zM279 79h1v15h-1zM280 79h1v11h-1zM281 83h1v7h-1zM282 83h1v11h-1zM283 74h1v16h-1zM284 79h1v15h-1zM285 79h1v15h-1zM286 83h1v11h-1zM287 79h1v11h-1zM288 79h1v15h-1zM289 81h1v13h-1zM290 83h1v11h-1zM291 79h1v11h-1zM292 83h1v7h-1zM293 83h1v11h-1zM294 81h1v13h-1zM295 79h1v11h-1zM296 81h1v9h-1zM297 83h1v11h-1zM298 79h1v15h-1zM299 79h1v11h-1zM300 83h1v11h-1zM301 79h1v15h-1zM302 81h1v13h-1zM303 79h1v15h-1zM304 79h1v10h-1zM305 79h1v10h-1zM306 79h1v15h-1zM307 79h1v10h-1zM308 81h1v8h-1zM309 81h1v8h-1zM310 79h1v15h-1zM311 79h1v10h-1zM312 79h1v15h-1zM313 79h1v10h-1zM314 79h1v15h-1zM315 79h1v15h-1zM316 79h1v10h-1zM317 79h1v10h-1zM318 82h1v12h-1zM319 79h1v10h-1zM320 79h1v15h-1zM321 81h1v8h-1zM322 79h1v10h-1zM323 79h1v10h-1zM324 81h1v8h-1zM325 79h1v10h-1zM326 79h1v10h-1zM327 79h1v10h-1zM328 79h1v10h-1zM329 79h1v15h-1zM330 79h1v10h-1zM331 79h1v10h-1zM332 79h1v15h-1zM333 79h1v10h-1zM334 81h1v8h-1zM335 79h1v15h-1zM336 82h1v7h-1zM337 79h1v15h-1zM338 79h1v15h-1zM339 79h1v10h-1zM340 81h1v8h-1zM341 79h1v10h-1zM342 82h1v12h-1zM343 79h1v10h-1zM344 81h1v8h-1zM345 79h1v10h-1zM346 81h1v8h-1zM347 79h1v10h-1zM348 79h1v10h-1zM349 79h1v15h-1zM350 79h1v15h-1zM351 79h1v10h-1zM352 82h1v12h-1zM353 79h1v15h-1zM354 79h1v15h-1zM355 79h1v10h-1zM356 79h1v10h-1zM357 79h1v10h-1zM358 82h1v7h-1zM359 82h1v7h-1zM360 79h1v15h-1zM361 82h1v12h-1zM362 82h1v7h-1zM363 81h1v8h-1zM364 79h1v10h-1zM365 79h1v15h-1zM366 79h1v10h-1zM367 79h1v10h-1zM368 79h1v10h-1zM369 79h1v10h-1zM370 79h1v15h-1zM371 79h1v10h-1zM372 79h1v10h-1zM373 82h1v7h-1zM374 79h1v15h-1zM375 79h1v15h-1zM376 82h1v12h-1zM377 79h1v10h-1zM378 82h1v7h-1zM379 81h1v13h-1zM380 79h1v10h-1zM381 82h1v7h-1zM382 79h1v10h-1zM383 79h1v15h-1zM384 79h1v15h-1zM385 79h1v15h-1zM386 79h1v15h-1zM387 79h1v15h-1zM388 79h1v10h-1zM389 82h1v7h-1zM390 79h1v10h-1zM391 79h1v10h-1zM392 79h1v10h-1zM393 79h1v10h-1zM394 79h1v10h-1zM395 81h1v8h-1zM396 81h1v8h-1zM397 79h1v10h-1zM398 79h1v10h-1zM399 79h1v15h-1zM400 79h1v15h-1zM401 81h1v13h-1zM402 82h1v7h-1zM403 79h1v10h-1zM404 74h1v15h-1zM405 79h1v10h-1zM406 79h1v10h-1zM407 79h1v10h-1zM408 79h1v15h-1zM409 79h1v15h-1zM410 79h1v10h-1zM411 81h1v13h-1zM412 79h1v15h-1zM413 81h1v13h-1zM414 82h1v7h-1zM415 79h1v10h-1zM416 79h1v10h-1zM417 79h1v15h-1zM418 79h1v10h-1zM419 81h1v8h-1zM420 79h1v10h-1zM421 81h1v13h-1zM422 79h1v15h-1zM423 79h1v10h-1zM424 79h1v10h-1zM425 81h1v8h-1zM426 79h1v15h-1zM427 81h1v8h-1zM428 79h1v10h-1zM429 81h1v8h-1zM430 79h1v10h-1zM431 79h1v10h-1zM432 79h1v10h-1zM433 82h1v7h-1zM434 79h1v10h-1zM435 81h1v8h-1zM436 79h1v10h-1zM437 81h1v8h-1zM438 79h1v10h-1zM439 79h1v10h-1zM440 81h1v8h-1zM441 79h1v10h-1zM442 74h1v15h-1zM443 82h1v12h-1zM444 79h1v15h-1zM445 79h1v10h-1zM446 81h1v8h-1zM447 79h1v10h-1zM448 79h1v10h-1zM449 79h1v10h-1zM450 82h1v7h-1zM451 79h1v10h-1zM452 79h1v10h-1zM453 82h1v12h-1zM454 79h1v10h-1zM455 79h1v10h-1zM456 79h1v10h-1zM457 81h1v8h-1zM458 79h1v15h-1zM459 81h1v8h-1zM460 81h1v13h-1zM461 79h1v15h-1zM462 79h1v10h-1zM463 82h1v12h-1zM464 79h1v10h-1zM465 79h1v10h-1zM466 81h1v8h-1zM467 79h1v10h-1zM468 79h1v15h-1zM469 81h1v8h-1zM470 79h1v10h-1zM471 79h1v15h-1zM472 79h1v15h-1zM473 79h1v15h-1zM474 81h1v8h-1zM475 79h1v15h-1zM476 79h1v10h-1zM477 81h1v8h-1zM478 79h1v10h-1zM479 79h1v10h-1zM480 81h1v8h-1zM481 79h1v15h-1zM482 79h1v15h-1zM483 79h1v15h-1zM484 82h1v7h-1zM485 74h1v15h-1zM486 82h1v12h-1zM487 82h1v12h-1zM488 81h1v13h-1zM489 82h1v7h-1zM490 81h1v13h-1zM491 79h1v10h-1zM492 79h1v10h-1zM493 79h1v10h-1zM494 81h1v8h-1zM495 79h1v10h-1zM496 79h1v15h-1zM497 79h1v15h-1zM498 79h1v10h-1zM499 79h1v10h-1zM500 82h1v7h-1zM501 79h1v10h-1zM502 79h1v10h-1zM503 81h1v13h-1zM504 79h1v10h-1zM505 79h1v10h-1zM506 79h1v10h-1zM507 82h1v12h-1zM508 81h1v13h-1zM509 79h1v10h-1zM510 79h1v10h-1zM511 79h1v10h-1zM512 79h1v15h-1zM513 79h1v10h-1zM514 81h1v8h-1zM515 82h1v7h-1zM516 79h1v10h-1zM517 79h1v15h-1zM518 79h1v10h-1zM519 79h1v10h-1zM520 79h1v15h-1zM521 79h1v15h-1zM522 79h1v10h-1zM523 74h1v20h-1zM524 79h1v10h-1zM525 79h1v10h-1zM526 81h1v8h-1zM527 79h1v10h-1zM528 81h1v8h-1zM529 79h1v10h-1zM530 82h1v7h-1zM531 79h1v10h-1zM532 79h1v15h-1zM533 79h1v15h-1zM534 79h1v10h-1zM535 79h1v15h-1zM536 81h1v8h-1zM537 79h1v10h-1zM538 79h1v15h-1zM539 79h1v10h-1zM540 79h1v15h-1zM541 79h1v15h-1zM542 79h1v15h-1zM543 81h1v8h-1zM544 79h1v10h-1zM545 79h1v15h-1zM546 79h1v10h-1zM547 79h1v15h-1zM548 82h1v12h-1zM549 82h1v7h-1zM550 81h1v13h-1zM551 82h1v12h-1zM552 81h1v13h-1zM553 79h1v15h-1zM554 79h1v10h-1zM555 81h1v8h-1zM556 79h1v10h-1zM557 79h1v10h-1zM558 79h1v15h-1zM559 79h1v10h-1zM560 82h1v12h-1zM561 79h1v15h-1zM562 79h1v10h-1zM563 79h1v10h-1zM564 82h1v12h-1zM565 74h1v15h-1zM566 82h1v7h-1zM567 82h1v7h-1zM568 79h1v10h-1zM569 79h1v10h-1zM570 82h1v7h-1zM571 79h1v15h-1zM572 81h1v13h-1zM573 79h1v15h-1zM574 81h1v8h-1zM575 81h1v8h-1zM576 79h1v10h-1zM577 82h1v12h-1zM578 79h1v15h-1zM579 81h1v8h-1zM580 82h1v12h-1zM581 79h1v10h-1zM582 79h1v10h-1zM583 81h1v8h-1zM584 79h1v15h-1zM585 82h1v7h-1zM586 79h1v10h-1zM587 79h1v15h-1zM588 79h1v10h-1zM589 79h1v15h-1zM590 79h1v15h-1zM591 79h1v15h-1zM592 79h1v15h-1zM593 79h1v10h-1zM594 79h1v10h-1zM595 79h1v10h-1zM596 79h1v15h-1zM597 74h1v20h-1zM598 79h1v10h-1zM599 79h1v10h-1zM600 75h1v14h-1zM601 79h1v10h-1zM602 81h1v13h-1zM603 81h1v8h-1zM604 81h1v8h-1zM605 79h1v15h-1zM606 79h1v10h-1zM607 75h1v14h-1zM608 81h1v8h-1zM609 81h1v8h-1zM610 82h1v7h-1zM611 81h1v8h-1z" fill="#ffff00"/>
<g fill="#000"><rect x="91" y="41" width="5" height="1"/><rect x="91" y="70" width="5" height="1"/><rect x="91" y="100" width="5" height="1"/><rect x="91" y="129" width="5" height="1"/><rect x="91" y="159" width="5" height="1"/><rect x="91" y="188" width="5" height="1"/><rect x="91" y="217" width="5" height="1"/><rect x="91" y="247" width="5" height="1"/><rect x="91" y="276" width="5" height="1"/><rect x="98" y="279" width="1" height="5"/><rect x="162" y="279" width="1" height="5"/><rect x="226" y="279" width="1" height="5"/><rect x="290" y="279" width="1" height="5"/><rect x="355" y="279" width="1" height="5"/><rect x="419" y="279" width="1" height="5"/><rect x="483" y="279" width="1" height="5"/><rect x="547" y="279" width="1" height="5"/><rect x="611" y="279" width="1" height="5"/></g>
<rect x="383" y="318" width="25" height="19" fill="#7fb97f"/><rect x="383" y="318" width="24" height="18" fill="#003c00"/><rect x="384" y="319" width="23" height="17" fill="#000"/>
<path fill="#ffff00" d="M385 331h1v1h-1zM386 330h1v1h-1zM387 329h1v1h-1zM388 328h1v1h-1zM389 327h1v1h-1zM390 326h1v1h-1zM391 325h1v1h-1zM392 324h1v1h-1zM393 323h1v1h-1zM394 322h1v1h-1zM395 321h1v1h-1zM396 322h1v1h-1zM397 323h1v1h-1zM398 324h1v1h-1zM399 325h1v1h-1zM400 326h1v1h-1zM401 327h1v1h-1zM402 328h1v1h-1zM403 329h1v1h-1zM404 330h1v1h-1zM405 331h1v1h-1z"/>
<rect x="489" y="318" width="25" height="19" fill="#7fb97f"/><rect x="489" y="318" width="24" height="18" fill="#003c00"/><rect x="490" y="319" width="23" height="17" fill="#000"/>
<path fill="#ff4d4d" d="M491 331h1v1h-1zM492 330h1v1h-1zM493 328h1v1h-1zM493 329h1v1h-1zM494 327h1v1h-1zM495 326h1v1h-1zM496 325h1v1h-1zM497 323h1v1h-1zM497 324h1v1h-1zM498 322h1v1h-1zM499 321h1v1h-1zM500 322h1v1h-1zM501 323h1v1h-1zM501 324h1v1h-1zM502 325h1v1h-1zM503 326h1v1h-1zM504 327h1v1h-1zM505 328h1v1h-1zM505 329h1v1h-1zM506 330h1v1h-1zM507 331h1v1h-1zM508 330h1v1h-1zM509 328h1v1h-1zM509 329h1v1h-1zM510 327h1v1h-1zM511 326h1v1h-1z"/>
<rect x="595" y="318" width="25" height="19" fill="#7fb97f"/><rect x="595" y="318" width="24" height="18" fill="#003c00"/><rect x="596" y="319" width="23" height="17" fill="#000"/>
<path fill="#00ff00" d="M597 331h1v1h-1zM598 330h1v1h-1zM599 328h1v1h-1zM599 329h1v1h-1zM600 327h1v1h-1zM601 326h1v1h-1zM602 325h1v1h-1zM603 323h1v1h-1zM603 324h1v1h-1zM604 322h1v1h-1zM605 321h1v1h-1zM606 322h1v1h-1zM607 323h1v1h-1zM607 324h1v1h-1zM608 325h1v1h-1zM609 326h1v1h-1zM610 327h1v1h-1zM611 328h1v1h-1zM611 329h1v1h-1zM612 330h1v1h-1zM613 331h1v1h-1zM614 330h1v1h-1zM615 328h1v1h-1zM615 329h1v1h-1zM616 327h1v1h-1zM617 326h1v1h-1z"/>
</svg>
<span class="t yl" style="top:35px">20m</span>
<span class="t yl" style="top:64px">15m</span>
<span class="t yl" style="top:94px">10m</span>
<span class="t yl" style="top:123px">5m</span>
<span class="t yl" style="top:153px">0</span>
<span class="t yl" style="top:182px">-5m</span>
<span class="t yl" style="top:211px">-10m</span>
<span class="t yl" style="top:241px">-15m</span>
<span class="t yl" style="top:270px">-20m</span>
<span class="t xl" style="left:78px;top:285px">0</span>
<span class="t xl" style="left:142px;top:285px">1u</span>
<span class="t xl" style="left:206px;top:285px">2u</span>
<span class="t xl" style="left:270px;top:285px">3u</span>
<span class="t xl" style="left:335px;top:285px">4u</span>
<span class="t xl" style="left:399px;top:285px">5u</span>
<span class="t xl" style="left:463px;top:285px">6u</span>
<span class="t xl" style="left:527px;top:285px">7u</span>
<span class="t xl" style="left:591px;top:285px">8u</span>
<span class="t" style="left:308px;top:320px;letter-spacing:-0.4px">Gscint_US</span>
<span class="t" style="left:414px;top:320px;letter-spacing:-0.3px">DS cherenk</span>
<span class="t" style="left:520px;top:320px;letter-spacing:0.25px">Drift scint</span>
<span class="t" style="left:26px;top:355px;letter-spacing:-0.02px">Offset and scale for display only.</span>
<span class="t" style="left:26px;top:370px;letter-spacing:-0.23px">True voltages saved to .csv</span>
<span class="t b" style="top:344px;letter-spacing:-0.33px">Offsets</span>
<span class="t b" style="top:376px;letter-spacing:-0.75px">Scale</span>
<svg style="position:absolute;left:0;top:0" width="643" height="425"><defs><linearGradient id="oT" x1="0" y1="0" x2="0" y2="1"><stop offset="0" stop-color="#acacac"/><stop offset="1" stop-color="#8a8a8a"/></linearGradient><linearGradient id="oL" x1="0" y1="0" x2="1" y2="0"><stop offset="0" stop-color="#acacac"/><stop offset="1" stop-color="#8a8a8a"/></linearGradient><linearGradient id="iT" x1="0" y1="0" x2="0" y2="1"><stop offset="0" stop-color="#9c9c9c"/><stop offset="1" stop-color="#6a6a6a"/></linearGradient><linearGradient id="iL" x1="0" y1="0" x2="1" y2="0"><stop offset="0" stop-color="#9c9c9c"/><stop offset="1" stop-color="#6a6a6a"/></linearGradient><linearGradient id="oB" x1="0" y1="0" x2="0" y2="1"><stop offset="0" stop-color="#bebebe"/><stop offset="1" stop-color="#aeaeae"/></linearGradient><linearGradient id="oR" x1="0" y1="0" x2="1" y2="0"><stop offset="0" stop-color="#bcbcbc"/><stop offset="1" stop-color="#c4c4c4"/></linearGradient></defs><rect x="300" y="342" width="330" height="60" fill="#9c9c9c"/><polygon points="300,402 630,402 626,398 304,398" fill="url(#oB)"/><polygon points="630,342 630,402 626,398 626,346" fill="url(#oR)"/><polygon points="300,342 630,342 626,346 304,346" fill="url(#oT)"/><polygon points="300,342 300,402 304,398 304,346" fill="url(#oL)"/><polygon points="304,371 411,371 407,367 308,367" fill="#b1b1b1"/><polygon points="411,346 411,371 407,367 407,350" fill="#b1b1b1"/><polygon points="304,346 411,346 407,350 308,350" fill="url(#iT)"/><polygon points="304,346 304,371 308,367 308,350" fill="url(#iL)"/><rect x="308" y="350" width="99" height="17" fill="#fafafa"/><polygon points="411,371 518,371 514,367 415,367" fill="#b1b1b1"/><polygon points="518,346 518,371 514,367 514,350" fill="#b1b1b1"/><polygon points="411,346 518,346 514,350 415,350" fill="url(#iT)"/><polygon points="411,346 411,371 415,367 415,350" fill="url(#iL)"/><rect x="415" y="350" width="99" height="17" fill="#fafafa"/><polygon points="518,371 626,371 622,367 522,367" fill="#b1b1b1"/><polygon points="626,346 626,371 622,367 622,350" fill="#b1b1b1"/><polygon points="518,346 626,346 622,350 522,350" fill="url(#iT)"/><polygon points="518,346 518,371 522,367 522,350" fill="url(#iL)"/><rect x="522" y="350" width="100" height="17" fill="#fafafa"/><polygon points="304,398 411,398 407,394 308,394" fill="#b1b1b1"/><polygon points="411,373 411,398 407,394 407,377" fill="#b1b1b1"/><polygon points="304,373 411,373 407,377 308,377" fill="url(#iT)"/><polygon points="304,373 304,398 308,394 308,377" fill="url(#iL)"/><rect x="308" y="377" width="99" height="17" fill="#fafafa"/><polygon points="411,398 518,398 514,394 415,394" fill="#b1b1b1"/><polygon points="518,373 518,398 514,394 514,377" fill="#b1b1b1"/><polygon points="411,373 518,373 514,377 415,377" fill="url(#iT)"/><polygon points="411,373 411,398 415,394 415,377" fill="url(#iL)"/><rect x="415" y="377" width="99" height="17" fill="#fafafa"/><polygon points="518,398 626,398 622,394 522,394" fill="#b1b1b1"/><polygon points="626,373 626,398 622,394 622,377" fill="#b1b1b1"/><polygon points="518,373 626,373 622,377 522,377" fill="url(#iT)"/><polygon points="518,373 518,398 522,394 522,377" fill="url(#iL)"/><rect x="522" y="377" width="100" height="17" fill="#fafafa"/></svg>
<span class="t" style="left:309.5px;top:352px;letter-spacing:-0.5px">0.01</span>
<span class="t" style="left:416.5px;top:352px;letter-spacing:-0.5px">0.001</span>
<span class="t" style="left:523.5px;top:352px;letter-spacing:-0.5px">-0.001</span>
<span class="t" style="left:309.5px;top:379px;letter-spacing:-0.5px">0.1</span>
<span class="t" style="left:416.5px;top:379px;letter-spacing:-0.5px">1</span>
<span class="t" style="left:523.5px;top:379px;letter-spacing:-0.5px">0.1</span>
</body></html>
